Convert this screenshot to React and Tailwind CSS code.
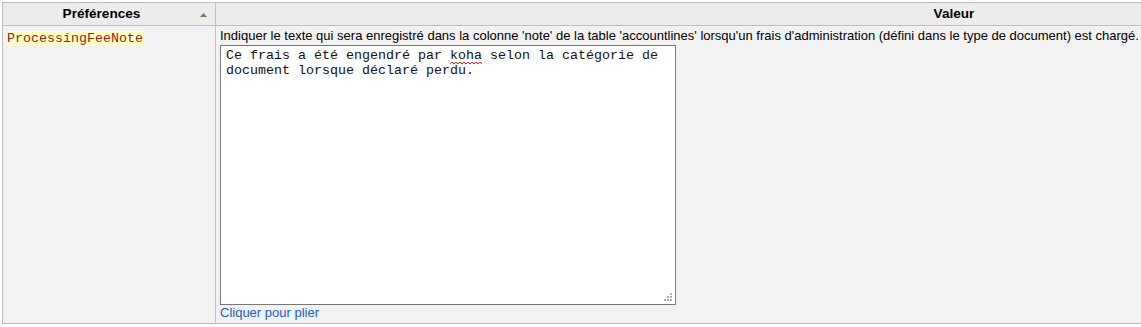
import React from 'react';

function SortArrow() {
  return (
    <svg width="7" height="4" viewBox="0 0 7 4" className="absolute right-[8px] top-[10px]">
      <path d="M0 4 L3.5 0 L7 4 Z" fill="#7d7a4c" />
    </svg>
  );
}

function ResizeGrip() {
  const dots = [
    [6, 0], [3, 3], [6, 3], [0, 6], [3, 6], [6, 6],
  ];
  return (
    <svg width="8" height="8" viewBox="0 0 8 8" className="absolute right-[3px] bottom-[3px]">
      {dots.map(([x, y], i) => (
        <rect key={i} x={x} y={y} width="2" height="2" fill="#b0b0b0" />
      ))}
    </svg>
  );
}

// red squiggle under a misspelt word
function Misspelt({ children }) {
  return (
    <span className="relative">
      {children}
      <svg width="32" height="3" viewBox="0 0 32 3" className="absolute left-0 bottom-[-2px]">
        <path d="M0 2 L2 0 L4 2 L6 0 L8 2 L10 0 L12 2 L14 0 L16 2 L18 0 L20 2 L22 0 L24 2 L26 0 L28 2 L30 0 L32 2" fill="none" stroke="#e02020" strokeWidth="1" />
      </svg>
    </span>
  );
}

export default function App() {
  return (
    <div className="w-[1141px] h-[327px] overflow-hidden bg-white pt-[2px] pl-[2px] font-['Liberation_Sans',Arial,sans-serif] text-[13px] text-black">
      <div className="w-[1691px] border border-[#bdbdbd]">
        {/* header */}
        <div className="flex h-[23px] bg-[#ececec] border-b border-[#bdbdbd]">
          <div className="relative w-[213px] border-r border-[#c4c4c4] pr-[15px] flex items-center justify-center font-bold text-[13.6px]">
            Préférences
            <SortArrow />
          </div>
          <div className="flex-1 flex items-center justify-center font-bold text-[13.6px]">
            Valeur
          </div>
        </div>
        {/* row */}
        <div className="flex h-[297px] bg-[#f2f2f2]">
          <div className="w-[213px] border-r border-[#c4c4c4] pl-[4px] pt-[2px]">
            <span className="bg-[#ffffc6] text-[#a01818] font-['Liberation_Mono',monospace] text-[13.33px] leading-[15px] inline-block">
              ProcessingFeeNote
            </span>
          </div>
          <div className="flex-1 pl-[4px] pt-[3px]">
            <div className="leading-[14px] whitespace-nowrap">
              Indiquer le texte qui sera enregistré dans la colonne 'note' de la table 'accountlines' lorsqu'un frais d'administration (défini dans le type de document) est chargé.
            </div>
            <div className="relative mt-[2px] w-[456px] h-[260px] bg-white border border-[#767676] px-[5px] py-[2px] font-['Liberation_Mono',monospace] text-[13.33px] leading-[15px] text-[#111]">
              Ce frais a été engendré par <Misspelt>koha</Misspelt> selon la catégorie de document lorsque déclaré perdu.
              <ResizeGrip />
            </div>
            <a href="#" className="block leading-[14px] mt-[1px] text-[#1d5fc2]">
              Cliquer pour plier
            </a>
          </div>
        </div>
      </div>
    </div>
  );
}
